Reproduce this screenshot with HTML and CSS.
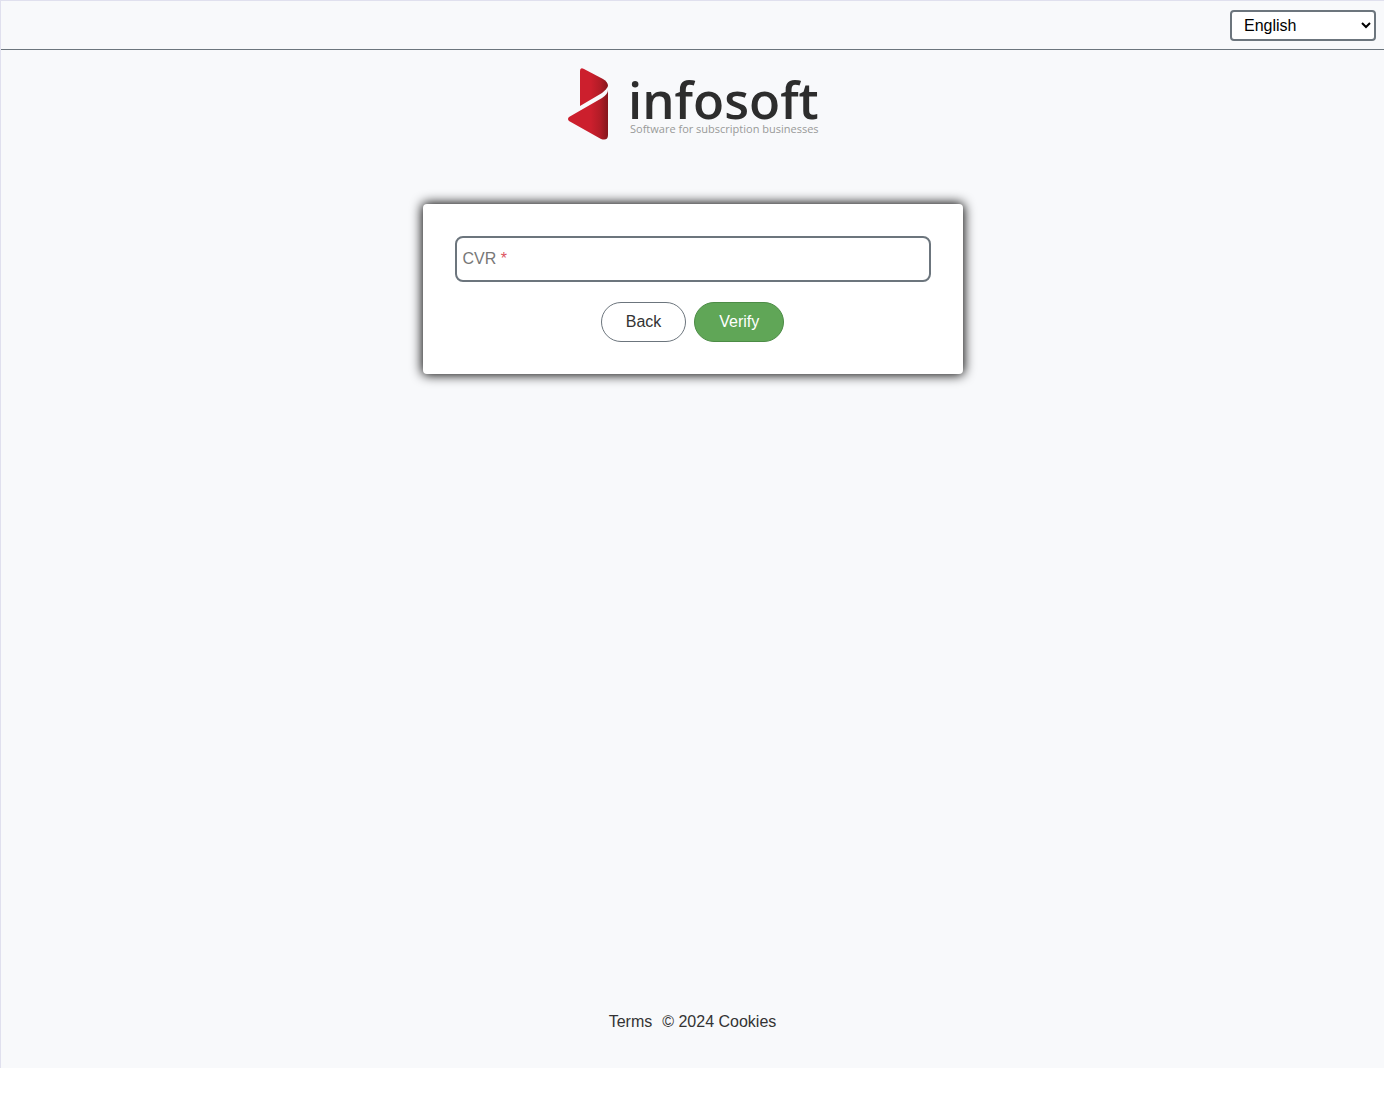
FILE: index.html
```html
<!DOCTYPE html>
<html lang="en">
<head>
  <meta charset="utf-8">
  <meta name="viewport" content="width=device-width, initial-scale=1">
  <title>Infosoft</title>
  <link rel="stylesheet" href="styles.css">
</head>
<body>
  <div class="page">
    <header class="topbar">
      <select class="language" aria-label="Language">
        <option selected>English</option>
        <option>Dansk</option>
        <option>Norsk</option>
        <option>Svenska</option>
      </select>
    </header>
    <main class="content">
      <svg class="logo" viewBox="0 0 252 74" role="img" aria-label="Infosoft">
        <defs>
          <linearGradient id="fold" gradientUnits="userSpaceOnUse" x1="0" y1="0" x2="41" y2="0">
            <stop offset="0.58" stop-color="#cc1f2d"/>
            <stop offset="0.8" stop-color="#b31c27"/>
            <stop offset="1" stop-color="#85161c"/>
          </linearGradient>
        </defs>
        <path fill="url(#fold)" d="M13 39V4Q13 0 17 2L36 12Q41 15 41 19Q40 22 35 26Z"/>
        <path fill="url(#fold)" d="M2 50L35 31Q41 27 41 23V68Q41 74 34 72L2 54Q0 52 2 50Z"/>
        <text class="logo-name" x="61" y="52">infosoft</text>
        <text class="logo-tagline" x="63" y="66">Software for subscription businesses</text>
      </svg>
      <form class="card">
        <div class="field">
          <input class="field-input" id="cvr" name="cvr" type="text" required>
          <label class="field-label" for="cvr">CVR <span class="required">*</span></label>
        </div>
        <div class="actions">
          <button class="button" type="button">Back</button>
          <button class="button button-primary" type="submit">Verify</button>
        </div>
      </form>
    </main>
    <footer class="footer">
      <a href="#terms">Terms</a>
      <span>© 2024 <a href="#cookies">Cookies</a></span>
    </footer>
  </div>
</body>
</html>
```
FILE: styles.css
```css
* {
  box-sizing: border-box;
}

body {
  margin: 0;
  background: #fff;
  color: #333;
  font: 16px/24px "Liberation Sans", Arial, sans-serif;
}

.page {
  display: flex;
  flex-direction: column;
  min-height: calc(100vh - 30px);
  border-top: 1px solid #e0e0ee;
  border-left: 1px solid #e0e0ee;
  background: #f8f9fb;
}

.topbar {
  display: flex;
  justify-content: flex-end;
  padding: 9px 8px 8px;
  border-bottom: 1px solid #6c757d;
}

.language {
  width: 146px;
  height: 31px;
  padding: 0 0 0 8px;
  border: 2px solid #6c757d;
  border-radius: 4px;
  background-color: #fff;
  color: #000;
  font: inherit;
}

.content {
  display: flex;
  flex: 1;
  flex-direction: column;
  align-items: center;
  padding: 17px 16px;
}

.logo {
  width: 252px;
  height: 74px;
  overflow: visible;
}

.logo-name {
  fill: #2d2d2d;
  font: 600 51px "Open Sans", sans-serif;
}

.logo-tagline {
  fill: #999;
  font: 400 11px "Open Sans", sans-serif;
}

.card {
  width: 100%;
  max-width: 540px;
  margin-top: 63px;
  padding: 32px;
  border-radius: 4px;
  background: #fff;
  box-shadow: 0 0 12px 1px #000;
}

.field {
  position: relative;
}

.field-input {
  display: block;
  width: 100%;
  height: 46px;
  padding: 8px;
  border: 2px solid #6c757d;
  border-radius: 8px;
  background: #fff;
  font: inherit;
}

.field-label {
  position: absolute;
  top: 11px;
  left: 8px;
  color: #777;
  pointer-events: none;
}

.required {
  color: #dc5560;
}

.actions {
  display: flex;
  justify-content: center;
  gap: 8px;
  margin-top: 20px;
}

.button {
  height: 40px;
  padding: 0 24px;
  border: 1px solid #6c757d;
  border-radius: 20px;
  background: #fff;
  color: #333;
  font: inherit;
}

.button-primary {
  border-color: #4c8c46;
  background: #60a657;
  color: #fff;
}

.footer {
  display: flex;
  justify-content: center;
  gap: 10px;
  padding-bottom: 34px;
}

.footer a {
  color: inherit;
  text-decoration: none;
}
```
